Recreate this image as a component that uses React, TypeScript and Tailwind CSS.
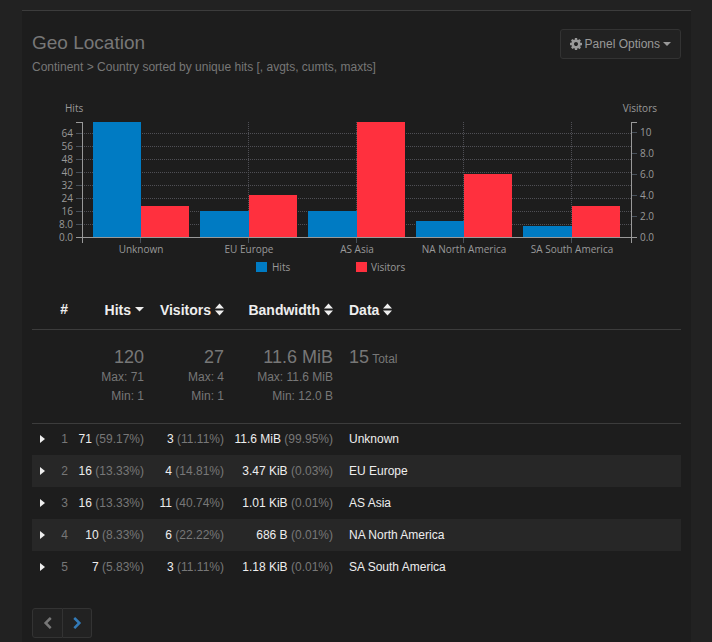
import React from "react";

type Row = {
  hits: string;
  hitsPct: string;
  visitors: string;
  visitorsPct: string;
  bandwidth: string;
  bandwidthPct: string;
  name: string;
};

const rows: Row[] = [
  { hits: "71", hitsPct: "59.17%", visitors: "3", visitorsPct: "11.11%", bandwidth: "11.6 MiB", bandwidthPct: "99.95%", name: "Unknown" },
  { hits: "16", hitsPct: "13.33%", visitors: "4", visitorsPct: "14.81%", bandwidth: "3.47 KiB", bandwidthPct: "0.03%", name: "EU Europe" },
  { hits: "16", hitsPct: "13.33%", visitors: "11", visitorsPct: "40.74%", bandwidth: "1.01 KiB", bandwidthPct: "0.01%", name: "AS Asia" },
  { hits: "10", hitsPct: "8.33%", visitors: "6", visitorsPct: "22.22%", bandwidth: "686 B", bandwidthPct: "0.01%", name: "NA North America" },
  { hits: "7", hitsPct: "5.83%", visitors: "3", visitorsPct: "11.11%", bandwidth: "1.18 KiB", bandwidthPct: "0.01%", name: "SA South America" },
];

const summaries = [
  { total: "120", max: "71", min: "1" },
  { total: "27", max: "4", min: "1" },
  { total: "11.6 MiB", max: "11.6 MiB", min: "12.0 B" },
];

function CogIcon() {
  return (
    <svg viewBox="0 0 1536 1536" className="size-3" fill="currentColor" aria-hidden="true">
      <path
        transform="translate(0 -128)"
        d="M1024 896q0-106-75-181t-181-75-181 75-75 181 75 181 181 75 181-75 75-181zm512-109v222q0 12-8 23t-20 13l-185 28q-19 54-39 91 35 50 107 138 10 12 10 25t-9 23q-27 37-99 108t-94 71q-12 0-26-9l-138-108q-44 23-91 38-16 136-29 186-7 28-36 28h-222q-14 0-24.500-8.500t-11.500-21.500l-28-184q-49-16-90-37l-141 107q-10 9-25 9-14 0-25-11-126-114-165-168-7-10-7-23 0-12 8-23 15-21 51-66.500t54-70.500q-27-50-41-99l-183-27q-13-2-21-12.500t-8-23.500v-222q0-12 8-23t19-13l186-28q14-46 39-92-40-57-107-138-10-12-10-24 0-10 9-23 26-36 98.500-107.500t94.500-71.500q13 0 26 10l138 107q44-23 91-38 16-136 29-186 7-28 36-28h222q14 0 24.500 8.500t11.500 21.500l28 184q49 16 90 37l142-107q9-9 24-9 13 0 25 10 129 119 165 170 7 8 7 22 0 12-8 23-15 21-51 66.500t-54 70.500q26 50 41 98l183 28q13 2 21 12.500t8 23.500z"
      />
    </svg>
  );
}

function CaretDown() {
  return (
    <svg viewBox="0 0 8 4" className="h-1 w-2" fill="currentColor" aria-hidden="true">
      <path d="M0 0h8L4 4z" />
    </svg>
  );
}

function SortDown() {
  return (
    <svg viewBox="0 0 9 13" className="h-[13px] w-[9px]" fill="currentColor" aria-hidden="true">
      <path d="M0 4h9L4.500 8.500z" />
    </svg>
  );
}

function SortBoth() {
  return (
    <svg viewBox="0 0 9 13" className="h-[13px] w-[9px]" fill="currentColor" aria-hidden="true">
      <path d="M0 5.500h9L4.500 0.500zM0 7.500h9L4.500 12.500z" />
    </svg>
  );
}

function CaretRight() {
  return (
    <svg viewBox="0 0 5 8" className="h-2 w-[5px]" fill="currentColor" aria-hidden="true">
      <path d="M0 0v8l5-4z" />
    </svg>
  );
}

function Chevron({ flip = false }: { flip?: boolean }) {
  return (
    <svg viewBox="0 0 1792 1792" className="size-[13px]" fill="currentColor" aria-hidden="true">
      <path
        transform={flip ? "translate(1792 0) scale(-1 1)" : undefined}
        d="M1427 301l-531 531 531 531q19 19 19 45t-19 45l-166 166q-19 19-45 19t-45-19l-742-742q-19-19-19-45t19-45l742-742q19-19 45-19t45 19l166 166q19 19 19 45t-19 45z"
      />
    </svg>
  );
}

const LEFT = 50;
const RIGHT = 599;
const TOP = 32;
const BASE = 147;

const groups = [
  { name: "Unknown", x: 61, mid: 109, hits: 115, visitors: 31 },
  { name: "EU Europe", x: 168, mid: 217, hits: 26, visitors: 42 },
  { name: "AS Asia", x: 276, mid: 325, hits: 26, visitors: 115 },
  { name: "NA North America", x: 384, mid: 432, hits: 16, visitors: 63 },
  { name: "SA South America", x: 491, mid: 540, hits: 11, visitors: 31 },
];
const hitTicks = ["0.0", "8.0", "16", "24", "32", "40", "48", "56", "64"];
const visitorTicks = ["0.0", "2.0", "4.0", "6.0", "8.0", "10"];

function Chart() {
  return (
    <svg
      viewBox="0 0 649 190"
      className="mt-3 block w-full text-[10px]"
      fontFamily='"Open Sans", "Noto Sans", sans-serif'
      fill="#999"
      role="img"
      aria-label="Hits and visitors by continent"
    >
      <text x="33" y="22">Hits</text>
      <text x="625" y="22" textAnchor="end">Visitors</text>

      <g stroke="#4f4f55" strokeDasharray="1 1" shapeRendering="crispEdges">
        {hitTicks.slice(1).map((t, i) => (
          <line key={t} x1={LEFT} x2={RIGHT} y1={BASE - 13 * (i + 1) + 0.5} y2={BASE - 13 * (i + 1) + 0.5} />
        ))}
        {groups.map((g) => (
          <line key={g.name} x1={g.mid - 0.5} x2={g.mid - 0.5} y1={TOP} y2={BASE} />
        ))}
      </g>

      {groups.map((g) => (
        <g key={g.name} shapeRendering="crispEdges">
          <rect x={g.x} y={BASE - g.hits} width={g.mid - g.x} height={g.hits} fill="#007bc3" />
          <rect x={g.mid} y={BASE - g.visitors} width="48" height={g.visitors} fill="#ff303e" />
        </g>
      ))}

      <g stroke="#47505a" shapeRendering="crispEdges">
        {hitTicks.map((t, i) => (
          <line key={t} x1={LEFT - 6} x2={LEFT} y1={BASE - 13 * i + 0.5} y2={BASE - 13 * i + 0.5} />
        ))}
        {visitorTicks.map((t, i) => (
          <line key={t} x1={RIGHT} x2={RIGHT + 6} y1={BASE - 21 * i + 0.5} y2={BASE - 21 * i + 0.5} />
        ))}
        {groups.map((g) => (
          <line key={g.name} x1={g.mid - 0.5} x2={g.mid - 0.5} y1={BASE} y2={BASE + 6} />
        ))}
      </g>

      <g stroke="#999" fill="none" shapeRendering="crispEdges">
        <path d="M44 32.500H50.500V147.500H44" />
        <path d="M605 32.500H599.500V147.500H605" />
        <path d="M50.500 153V147.500H599.500V153" />
      </g>

      {hitTicks.map((t, i) => (
        <text key={t} x="41" y={BASE - 13 * i + 4} textAnchor="end">{t}</text>
      ))}
      {visitorTicks.map((t, i) => (
        <text key={t} x="608" y={BASE - 21 * i + 4}>{t}</text>
      ))}
      {groups.map((g) => (
        <text key={g.name} x={g.mid} y="163" textAnchor="middle">{g.name}</text>
      ))}

      <rect x="224" y="172" width="11" height="10" fill="#007bc3" />
      <text x="240" y="181">Hits</text>
      <rect x="324" y="172" width="11" height="10" fill="#ff303e" />
      <text x="339" y="181">Visitors</text>
    </svg>
  );
}

function Value({ value, pct }: { value: string; pct: string }) {
  return (
    <td className="pr-2 text-right whitespace-nowrap">
      {value} <span className="text-[#777]">({pct})</span>
    </td>
  );
}

function SortHead({ label, both = true, left = false }: { label: string; both?: boolean; left?: boolean }) {
  return (
    <th scope="col" className={left ? "px-2 text-left" : "pr-2 text-right"}>
      <button type="button" className="inline-flex items-center gap-1 align-middle font-bold">
        {label}
        {both ? <SortBoth /> : <SortDown />}
      </button>
    </th>
  );
}

export default function App() {
  return (
    <div className='flex min-h-screen flex-col bg-[#222] pt-[10px] pr-[21px] pl-[22px] font-["Liberation_Sans",Arial,sans-serif] text-xs text-[#777]'>
      <section className="grow border-t border-[#3c3c3c] bg-[#1d1d1d] px-[10px] pt-[18px] pb-1">
        <header className="flex items-start justify-between">
          <div>
            <h2 className="text-[19px] leading-7">Geo Location</h2>
            <p className="text-xs leading-[21px]">Continent &gt; Country sorted by unique hits [, avgts, cumts, maxts]</p>
          </div>
          <button
            type="button"
            className="flex h-[30px] items-center gap-[3px] rounded-[3px] border border-[#333] bg-[#222] px-[9px] text-[#999]"
          >
            <CogIcon />
            Panel Options
            <CaretDown />
          </button>
        </header>

        <Chart />

        <table className="mt-[10px] w-full table-fixed border-collapse">
          <colgroup>
            <col className="w-5" />
            <col className="w-6" />
            <col className="w-[76px]" />
            <col className="w-20" />
            <col className="w-[109px]" />
            <col />
          </colgroup>
          <thead>
            <tr className="h-[39px] border-b border-[#3c3c3c] text-sm whitespace-nowrap text-[#eee]">
              <td />
              <th scope="col" className="pr-2 text-right">#</th>
              <SortHead label="Hits" both={false} />
              <SortHead label="Visitors" />
              <SortHead label="Bandwidth" />
              <SortHead label="Data" left />
            </tr>
          </thead>
          <tbody>
            <tr className="h-[94px] border-b border-[#3c3c3c] align-top whitespace-nowrap">
              <td />
              <td />
              {summaries.map((s) => (
                <td key={s.total} className="pt-4 pr-2 text-right">
                  <div className="text-lg leading-[22px]">{s.total}</div>
                  <div className="leading-[19px]">Max: {s.max}</div>
                  <div className="leading-[19px]">Min: {s.min}</div>
                </td>
              ))}
              <td className="px-2 pt-4 leading-[22px]">
                <span className="text-lg leading-[22px]">15</span> Total
              </td>
            </tr>
            {rows.map((r, i) => (
              <tr key={r.name} className="h-8 text-[#eee] odd:bg-[#272727]">
                <td className="pl-2">
                  <button type="button" aria-label={`Expand ${r.name}`} className="flex items-center">
                    <CaretRight />
                  </button>
                </td>
                <td className="pr-2 text-right text-[#777]">{i + 1}</td>
                <Value value={r.hits} pct={r.hitsPct} />
                <Value value={r.visitors} pct={r.visitorsPct} />
                <Value value={r.bandwidth} pct={r.bandwidthPct} />
                <td className="px-2">{r.name}</td>
              </tr>
            ))}
          </tbody>
        </table>

        <nav className="mt-[25px] flex" aria-label="Pagination">
          <button
            type="button"
            aria-label="Previous page"
            className="flex h-[30px] w-[31px] items-center justify-center rounded-l-[3px] border border-[#333] bg-[#222] text-[#777]"
          >
            <Chevron />
          </button>
          <button
            type="button"
            aria-label="Next page"
            className="flex h-[30px] w-[29px] items-center justify-center rounded-r-[3px] border border-l-0 border-[#333] bg-[#222] text-[#337ab7]"
          >
            <Chevron flip />
          </button>
        </nav>
      </section>
    </div>
  );
}
